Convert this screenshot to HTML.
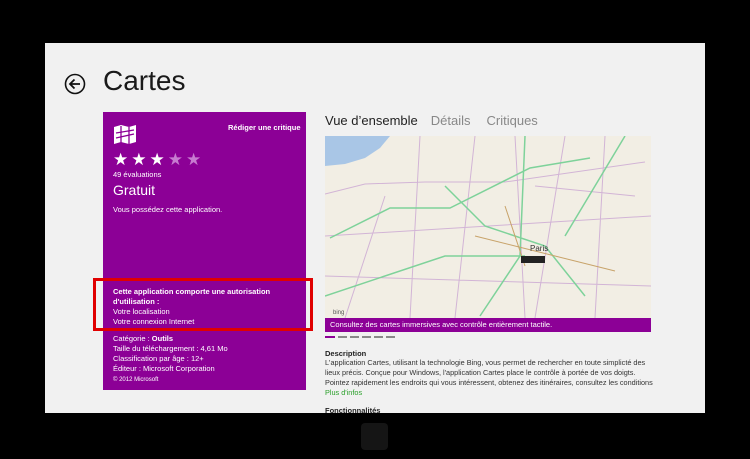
<!DOCTYPE html>
<html><head><meta charset="utf-8"><style>
*{margin:0;padding:0;box-sizing:border-box}
body{width:750px;height:459px;background:#000;position:relative;overflow:hidden;font-family:"Liberation Sans",sans-serif}
.scr{position:absolute;left:45px;top:43px;width:660px;height:370px;background:#f1f1f1;overflow:hidden}
.abs{position:absolute}
.panel{position:absolute;left:58px;top:69px;width:203px;height:278px;background:#8c0096;color:#fff}
.t{position:absolute;white-space:nowrap}
</style></head><body>
<div class="scr">
 <svg class="abs" style="left:19px;top:30px" width="22" height="22" viewBox="0 0 22 22"><circle cx="11" cy="11" r="9.5" fill="none" stroke="#111" stroke-width="1.6"/><path d="M16 11H6M10.5 6.5L6 11l4.5 4.5" fill="none" stroke="#111" stroke-width="1.8"/></svg>
 <div class="t" style="left:58px;top:22px;font-size:28px;color:#1a1a1a">Cartes</div>
 <div class="panel">
  <svg class="abs" style="left:10px;top:12px" width="24" height="22" viewBox="0 0 24 22"><path d="M1 3l7-2 8 2 7-2v17l-7 2-8-2-7 2z" fill="#fff"/><path d="M3 9l18-3M3 14l18-4M8 2v17M16 3v17" stroke="#8c0096" stroke-width="1.3" fill="none"/></svg>
  <div class="t" style="left:125px;top:11px;font-size:7.5px;font-weight:bold">Rédiger une critique</div>
  <div class="t" style="left:10px;top:38px;font-size:17px;letter-spacing:3px">★★★<span style="color:#c77bd0">★★</span></div>
  <div class="t" style="left:10px;top:58px;font-size:7.5px">49 évaluations</div>
  <div class="t" style="left:10px;top:70px;font-size:14px">Gratuit</div>
  <div class="t" style="left:10px;top:93px;font-size:7.5px">Vous possédez cette application.</div>
  <div class="t" style="left:10px;top:175px;font-size:7.5px;line-height:10px;font-weight:bold">Cette application comporte une autorisation<br>d'utilisation :</div>
  <div class="t" style="left:10px;top:195px;font-size:7.5px;line-height:10px">Votre localisation<br>Votre connexion Internet</div>
  <div class="t" style="left:10px;top:222px;font-size:7.5px;line-height:10px">Catégorie : <b>Outils</b><br>Taille du téléchargement : 4,61 Mo<br>Classification par âge : 12+<br>Éditeur : Microsoft Corporation<br><span style="font-size:6px">© 2012 Microsoft</span></div>
 </div>
 <div class="abs" style="left:48px;top:235px;width:220px;height:53px;border:3px solid #e00000"></div>
 <div class="t" style="left:280px;top:70px;font-size:13px;color:#222">Vue d’ensemble<span style="color:#888;margin-left:13px">Détails</span><span style="color:#888;margin-left:16px">Critiques</span></div>
 <svg class="abs" style="left:280px;top:93px" width="326" height="182" viewBox="0 0 326 182">
  <rect width="326" height="182" fill="#f2eee4"/>
  <path d="M0 0H65L55 12 40 22 20 28 0 30z" fill="#a9c6e6"/>
  <path d="M0 58l40-10 60-2 80 0 140 -20M95 0l-10 182M150 0l-20 182M190 0l10 182M210 50l100 10M0 100l326-20M0 140l326 10M240 0l-30 182M280 0l-10 182M60 60l-40 122" stroke="#d2b4d6" stroke-width="1" fill="none"/>
  <path d="M5 102l60-30 60 0 80-40 60-10M120 50l40 40 60 20 40 50M200 0l-5 120 -40 60M300 0l-60 100M0 160l120-40 80 0" stroke="#7ed29a" stroke-width="1.5" fill="none"/>
  <path d="M150 100l60 15 80 20 M180 70l20 60" stroke="#c8a36a" stroke-width="1" fill="none"/>
  <rect x="196" y="120" width="24" height="7" fill="#222"/>
  <text x="8" y="178" font-size="6" fill="#555" font-family="Liberation Sans">bing</text>
  <text x="205" y="115" font-size="8" fill="#333" font-family="Liberation Sans">Paris</text>
 </svg>
 <div class="abs" style="left:280px;top:275px;width:326px;height:14px;background:#8c0096;color:#fff;font-size:7.5px;padding:2px 5px">Consultez des cartes immersives avec contrôle entièrement tactile.</div>
 <div class="abs" style="left:280px;top:293px;width:10px;height:2px;background:#8c0096"></div>
 <div class="abs" style="left:293px;top:293px;width:58px;height:2px;background:repeating-linear-gradient(90deg,#888 0 9px,transparent 9px 12px)"></div>
 <div class="t" style="left:280px;top:306px;font-size:7.5px;font-weight:bold;color:#222">Description</div>
 <div class="t" style="left:280px;top:315px;font-size:7.3px;line-height:10px;color:#333">L'application Cartes, utilisant la technologie Bing, vous permet de rechercher en toute simplicté des<br>lieux précis. Conçue pour Windows, l'application Cartes place le contrôle à portée de vos doigts.<br>Pointez rapidement les endroits qui vous intéressent, obtenez des itinéraires, consultez les conditions<br><span style="color:#2aa02a">Plus d'infos</span></div>
 <div class="t" style="left:280px;top:363px;font-size:7.5px;font-weight:bold;color:#222">Fonctionnalités</div>
</div>
<div class="abs" style="left:361px;top:423px;width:27px;height:27px;background:#151515;border-radius:4px"></div>
</body></html>
